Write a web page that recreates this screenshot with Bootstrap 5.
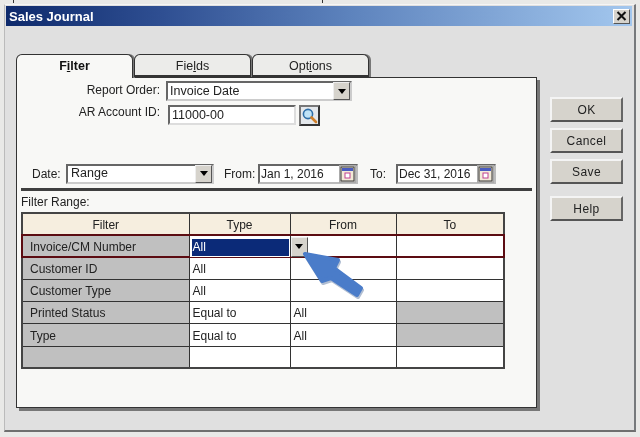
<!DOCTYPE html>
<html lang="en">
<head>
<meta charset="utf-8">
<title>Sales Journal</title>
<link href="https://cdn.jsdelivr.net/npm/bootstrap@5.3.0/dist/css/bootstrap.min.css" rel="stylesheet">
<style>
html,body{height:437px;overflow:hidden}
body{background:#e9e9e7;font-family:"Liberation Sans",Arial,sans-serif;font-size:12px;color:#222;position:relative}
.top-ticks{height:4px;position:relative}
.tick{position:absolute;top:0;width:1px;height:3px;background:#333}
.win{margin-left:4px;width:632px;height:428px;background:#e0e0e0;border-right:2px solid #77797c;border-bottom:2px solid #6f6f6f;border-left:1px solid #bbb;border-top:1px solid #f5f5f5;padding:1px 2px 0 1px;position:relative;filter:blur(.3px)}
.titlebar{height:20px;background:linear-gradient(90deg,#0e2a6c 0%,#2f4f92 25%,#5d83bd 55%,#a3c7ee 100%);color:#fff;font-weight:700;font-size:13px;padding-left:3px;line-height:20px}
.titlebar>span{padding-top:1px}
.xbtn{width:17px;height:15px;background:#d6d3cc;border:1px solid;border-color:#fff #555 #555 #fff;padding:0;margin-right:2px;line-height:0}
.body-area{padding:28px 0 0 10px;gap:4px}
.left-col{width:530px}
.nav-tabs.wtabs{border:0;height:23px;gap:1px;position:relative;z-index:2}
.wtabs .nav-link{width:117px;height:23px;padding:0;border:1px solid #333;border-bottom:2px solid #333;border-radius:6px 6px 0 0;background:#ececea;color:#222;text-align:center;font-size:12.5px;line-height:22px;box-shadow:2px 0 0 #777}
.nav-tabs.wtabs .nav-link.active{background:#f8f8f6;font-weight:700;border-color:#333 #333 transparent;border-bottom:0;color:#111;height:24px}
.wpanel{width:521px;height:331px;background:#f8f8f6;border:1px solid #333;box-shadow:3px 3px 0 #777;padding:3px 4px 0 4px}
.lbl{color:#222;white-space:nowrap}
.r1lbl{width:139px;text-align:right;line-height:15px}
.sel{background:#fff;border:2px solid;border-color:#666 #ccc #ccc #666;display:flex;align-items:center;justify-content:space-between;color:#222;padding-left:2px;height:20px;font-size:12.5px}
.ddb{width:17px;height:18px;background:#d6d3cc;border:1px solid;border-color:#eee #555 #555 #eee;padding:0;display:flex;align-items:center;justify-content:center;flex:none}
.ddb i{display:block;border:4px solid transparent;border-top:5px solid #000;border-bottom:0}
.inp{background:#fff;border:2px solid;border-color:#666 #ddd #ddd #666;height:20px;line-height:17px;padding-left:2px;color:#222;white-space:nowrap;font-size:12.5px}
.magn{width:21px;height:21px;border:2px solid;border-color:#777 #333 #333 #777;background:#e4e8ec;padding:0;line-height:0;margin-left:3px}
.date-row{margin-top:37px;height:21px}
.datebox{width:100px;height:20px;display:flex;align-items:center;justify-content:space-between;background:#fff;border:2px solid;border-color:#666 #bbb #bbb #666;padding-left:1px;color:#222;white-space:nowrap}
.cal{width:17px;height:18px;flex:none;background:#d6d3cc;border:1px solid #aaa;line-height:0}
.sepline{height:3px;background:#3f3f3f;margin-top:4px}
.caption{margin-top:4px;height:17px;line-height:15px}
table.grid{table-layout:fixed;width:482px;border-collapse:collapse;margin:0;border:2px solid #444}
table.grid th,table.grid td{border:1px solid #333;height:22.2px;padding:1px 0 0 3px;font-weight:400;font-size:12px;line-height:16px;color:#222;box-shadow:none;background:#fff;white-space:nowrap}
table.grid th{background:#f6eedf;text-align:center;padding:1px 0 0}
table.grid td.fname{background:#c0c0c0;padding-left:7px}
table.grid td.off{background:#c0c0c0}
tr.hot{outline:2px solid #5c0c12;outline-offset:-1px}
td.sel-cell{position:relative}
.sel-val{position:absolute;left:2px;top:3px;width:97px;height:17px;background:#0b2a78;color:#fff;padding-left:1px;line-height:17px}
.sel-dd{position:absolute;left:101px;top:1px;height:20px;z-index:3}
.tbl-wrap{position:relative}
.rail{width:73px;padding-top:43px}
.wbtn{width:73px;height:25px;background:#d6d3cc;border:1px solid;border-color:#f4f4f4 #666 #555 #f4f4f4;border-width:2px;border-radius:0;padding:0;font-size:12px;color:#222;letter-spacing:.4px;--bs-btn-hover-bg:#d6d3cc;--bs-btn-hover-color:#222}
.arrow{position:absolute;left:0;top:0;width:640px;height:437px;pointer-events:none;z-index:5}
</style>
</head>
<body>
<div class="top-ticks"><span class="tick" style="left:13px"></span><span class="tick" style="left:322px"></span></div>
<div class="win d-flex flex-column">
  <div class="titlebar d-flex align-items-center justify-content-between">
    <span>Sales Journal</span>
    <button type="button" class="xbtn d-flex align-items-center justify-content-center" aria-label="Close">
      <svg width="11" height="10" viewBox="0 0 11 10"><path d="M1.5 1l8 8M9.5 1l-8 8" stroke="#111" stroke-width="2"/></svg>
    </button>
  </div>
  <div class="body-area d-flex">
    <div class="left-col">
      <ul class="nav nav-tabs wtabs flex-nowrap">
        <li class="nav-item"><a class="nav-link active" href="#">F<u>i</u>lter</a></li>
        <li class="nav-item"><a class="nav-link" href="#">Fie<u>l</u>ds</a></li>
        <li class="nav-item"><a class="nav-link" href="#">Opt<u>i</u>ons</a></li>
      </ul>
      <div class="wpanel">
        <div class="d-flex gap-1 align-items-start">
          <div class="lbl r1lbl" style="padding-top:2px">Report Order:</div>
          <div class="sel" style="width:186px;margin-left:2px"><span>Invoice Date</span><span class="ddb"><i></i></span></div>
        </div>
        <div class="d-flex align-items-start mt-1">
          <div class="lbl r1lbl">AR Account ID:</div>
          <div class="inp" style="width:128px;margin-left:8px">11000-00</div>
          <button type="button" class="magn" aria-label="Search">
            <svg width="17" height="17" viewBox="0 0 17 17"><circle cx="7" cy="7" r="4.6" fill="#bfe3f7" stroke="#2f6fa8" stroke-width="1.6"/><path d="M10.5 10.5l4.5 4.5" stroke="#d0802a" stroke-width="2.6" stroke-linecap="round"/></svg>
          </button>
        </div>
        <div class="date-row d-flex align-items-center">
          <div class="lbl" style="width:45px;padding-left:11px">Date:</div>
          <div class="sel" style="width:148px;padding-left:3px"><span>Range</span><span class="ddb"><i></i></span></div>
          <div class="lbl" style="width:44px;padding-left:10px">From:</div>
          <div class="datebox"><span>Jan 1, 2016</span>
            <span class="cal"><svg width="15" height="16" viewBox="0 0 15 16"><rect x="1" y="1" width="13" height="14" fill="#f3ead8" stroke="#333"/><rect x="2" y="2" width="11" height="3" fill="#4a5cc0"/><rect x="5" y="7" width="5" height="5" fill="#fff" stroke="#c04090"/></svg></span></div>
          <div class="lbl" style="width:38px;padding-left:12px">To:</div>
          <div class="datebox"><span>Dec 31, 2016</span>
            <span class="cal"><svg width="15" height="16" viewBox="0 0 15 16"><rect x="1" y="1" width="13" height="14" fill="#f3ead8" stroke="#333"/><rect x="2" y="2" width="11" height="3" fill="#4a5cc0"/><rect x="5" y="7" width="5" height="5" fill="#fff" stroke="#c04090"/></svg></span></div>
        </div>
        <div class="sepline"></div>
        <div class="caption lbl">Filter Range:</div>
        <div class="tbl-wrap">
          <table class="grid">
            <colgroup><col style="width:167px"><col style="width:101px"><col style="width:106px"><col style="width:108px"></colgroup>
            <thead><tr><th>Filter</th><th>Type</th><th>From</th><th>To</th></tr></thead>
            <tbody>
              <tr class="hot"><td class="fname">Invoice/CM Number</td><td class="sel-cell"><span class="sel-val">All</span><span class="ddb sel-dd"><i></i></span></td><td></td><td></td></tr>
              <tr><td class="fname">Customer ID</td><td>All</td><td></td><td></td></tr>
              <tr><td class="fname">Customer Type</td><td>All</td><td></td><td></td></tr>
              <tr><td class="fname">Printed Status</td><td>Equal to</td><td>All</td><td class="off"></td></tr>
              <tr><td class="fname">Type</td><td>Equal to</td><td>All</td><td class="off"></td></tr>
              <tr><td class="fname"></td><td></td><td></td><td></td></tr>
            </tbody>
          </table>
        </div>
      </div>
    </div>
    <div class="rail d-flex flex-column">
      <button type="button" class="btn wbtn">OK</button>
      <button type="button" class="btn wbtn" style="margin-top:6px">Cancel</button>
      <button type="button" class="btn wbtn" style="margin-top:6px">Save</button>
      <button type="button" class="btn wbtn" style="margin-top:12px">Help</button>
    </div>
  </div>
</div>
<svg class="arrow" viewBox="0 0 640 437">
  <path d="M305 254L338 260L334 268L361 288L357 295L331 278L322 281Z" fill="#3e5f90" opacity=".4" transform="translate(1 2)" stroke="#3e5f90" stroke-width="4" stroke-linejoin="round"/>
  <path d="M305 254L338 260L334 268L361 288L357 295L331 278L322 281Z" fill="#4a7cc9" stroke="#4a7cc9" stroke-width="4" stroke-linejoin="round"/>
</svg>
</body>
</html>
